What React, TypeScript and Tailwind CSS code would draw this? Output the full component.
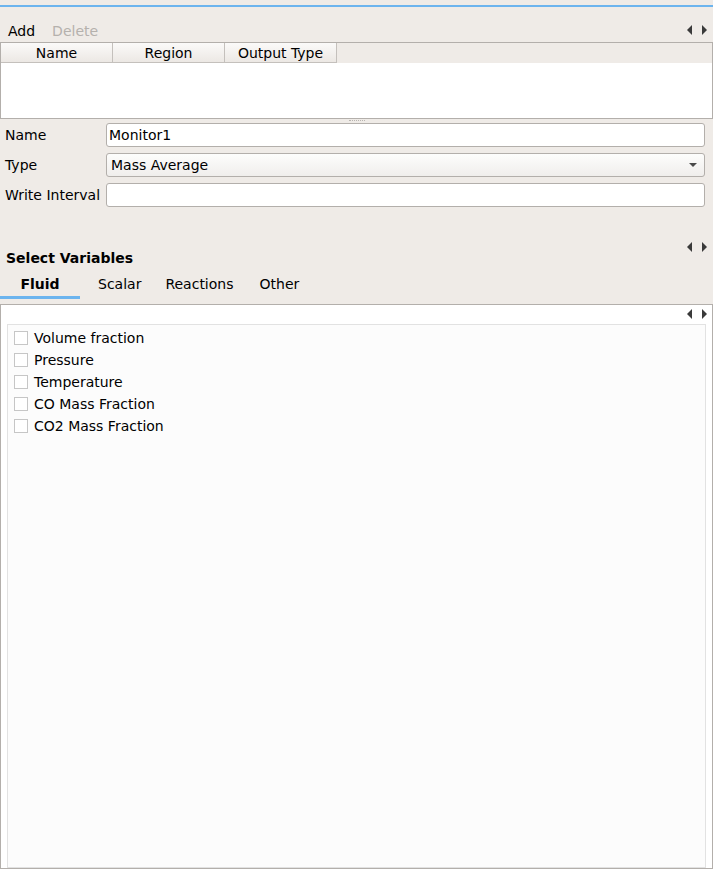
import React from "react";

function Arrows() {
  return (
    <div className="flex items-center gap-[10px]">
      <svg width="5" height="10" viewBox="0 0 5 10">
        <polygon points="5,0 5,10 0,5" fill="#3a3a3a" />
      </svg>
      <svg width="5" height="10" viewBox="0 0 5 10">
        <polygon points="0,0 0,10 5,5" fill="#3a3a3a" />
      </svg>
    </div>
  );
}

const vars = [
  "Volume fraction",
  "Pressure",
  "Temperature",
  "CO Mass Fraction",
  "CO2 Mass Fraction",
];

export default function App() {
  return (
    <div
      className="w-[713px] h-[869px] bg-[#efebe7] text-[#000000] text-[14px] leading-[16px] flex flex-col overflow-hidden"
      style={{ fontFamily: '"DejaVu Sans", Verdana, sans-serif' }}
    >
      <div className="h-[5px] shrink-0" />
      <div className="h-[2px] bg-[#6cb4ee] shrink-0" />
      {/* toolbar */}
      <div className="h-[35px] shrink-0 flex items-start justify-between pt-[15px]">
        <div className="flex items-center gap-[17px] pl-[8px] h-[16px] mt-[1px]">
          <span>Add</span>
          <span className="text-[#b5b1ad]">Delete</span>
        </div>
        <div className="pr-[6px] h-[16px] flex items-center">
          <Arrows />
        </div>
      </div>
      {/* table */}
      <div className="h-[77px] shrink-0 border border-[#b3afab] flex flex-col">
        <div className="h-[20px] flex">
          {["Name", "Region", "Output Type"].map((h) => (
            <div
              key={h}
              className="w-[112px] h-full flex items-center justify-center border-r border-b border-[#c4c0bc] bg-gradient-to-b from-[#fbfaf9] to-[#ece8e4]"
            >
              {h}
            </div>
          ))}
          <div className="flex-1 h-full bg-[#efebe7]" />
        </div>
        <div className="flex-1 bg-white" />
      </div>
      <div className="h-[4px] shrink-0 flex justify-center items-start">
        <div className="w-[16px] mt-[1px] border-t border-dotted border-[#b8b4b0]" />
      </div>
      {/* form */}
      <div className="flex flex-col gap-[6px] pl-[5px] pr-[8px] shrink-0">
        <div className="flex items-center h-[24px]">
          <div className="w-[101px]">Name</div>
          <div className="flex-1 h-full bg-white border border-[#b3afab] rounded-[3px] flex items-center pl-[2px]">
            Monitor1
          </div>
        </div>
        <div className="flex items-center h-[24px]">
          <div className="w-[101px]">Type</div>
          <div className="flex-1 h-full border border-[#b3afab] rounded-[3px] flex items-center justify-between pl-[4px] pr-[7px] bg-gradient-to-b from-[#fdfdfc] to-[#f0eeec]">
            <span>Mass Average</span>
            <svg width="8" height="4" viewBox="0 0 8 4">
              <polygon points="0,0 8,0 4,4" fill="#4a4a4a" />
            </svg>
          </div>
        </div>
        <div className="flex items-center h-[24px]">
          <div className="w-[101px]">Write Interval</div>
          <div className="flex-1 h-full bg-white border border-[#b3afab] rounded-[3px]" />
        </div>
      </div>
      {/* select variables header */}
      <div className="h-[35px] shrink-0" />
      <div className="h-[10px] shrink-0 flex justify-end items-center pr-[6px]">
        <Arrows />
      </div>
      <div className="pl-[6px] font-bold shrink-0 h-[12px] leading-[12px] flex items-center">
        Select Variables
      </div>
      <div className="h-[7px] shrink-0" />
      {/* tabs */}
      <div className="flex shrink-0 h-[28px]">
        <div className="w-[80px] flex flex-col items-center">
          <div className="h-[25px] flex items-center font-bold">Fluid</div>
          <div className="h-[3px] w-full bg-[#6cb4ee]" />
        </div>
        <div className="pl-[18px] h-[25px] flex items-center">Scalar</div>
        <div className="pl-[24px] h-[25px] flex items-center">Reactions</div>
        <div className="pl-[26px] h-[25px] flex items-center">Other</div>
      </div>
      <div className="h-[5px] shrink-0" />
      {/* panel */}
      <div className="flex-1 border border-[#b3afab] bg-white flex flex-col">
        <div className="h-[19px] shrink-0 flex justify-end items-start pr-[5px] pt-[4px]">
          <Arrows />
        </div>
        <div className="flex-1 mx-[6px] bg-[#fcfcfc] border border-[#e2e2e2] pt-[2px] pl-[6px] flex flex-col">
          {vars.map((v) => (
            <div key={v} className="h-[22px] flex items-center gap-[6px]">
              <div className="w-[14px] h-[14px] bg-white border border-[#c6c6c6]" />
              <span>{v}</span>
            </div>
          ))}
        </div>
      </div>
    </div>
  );
}
